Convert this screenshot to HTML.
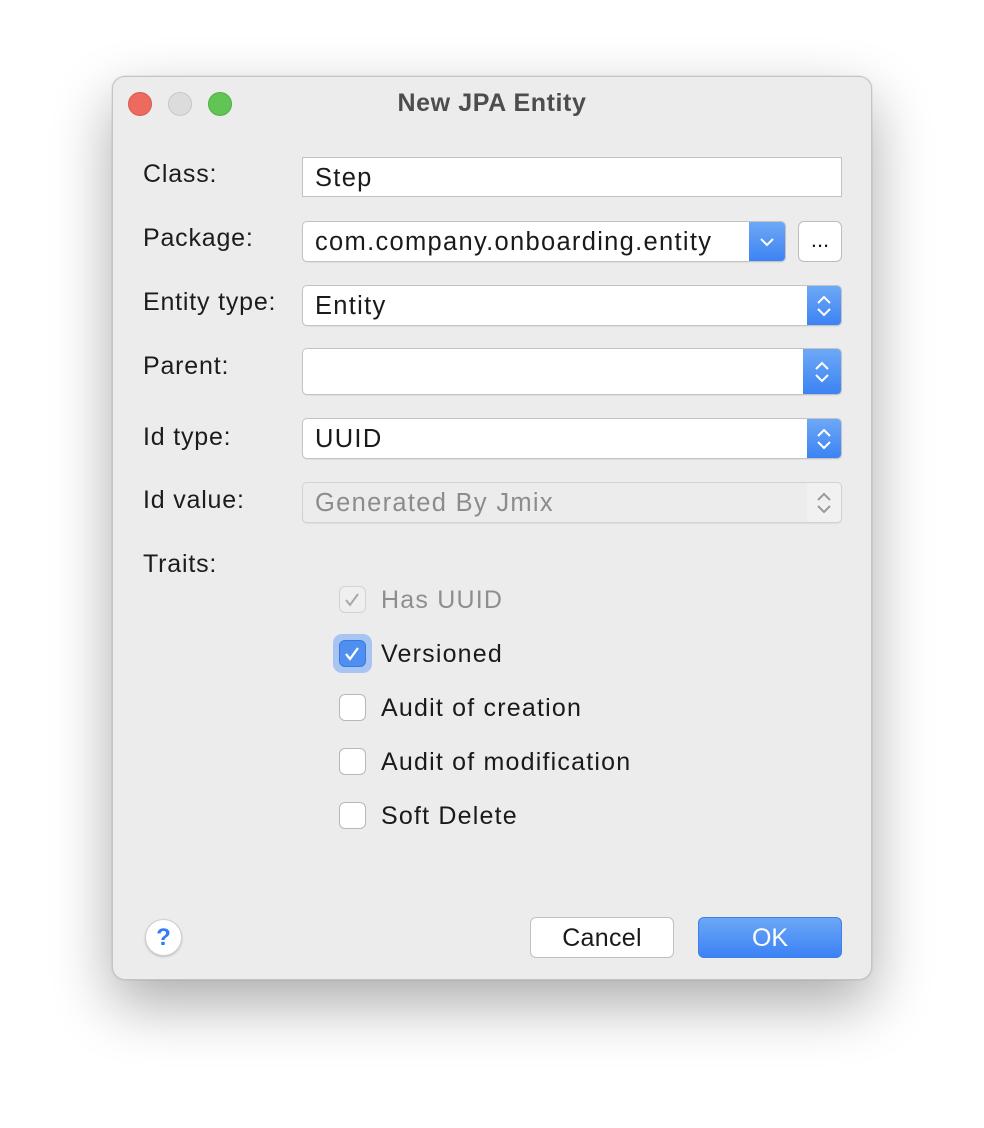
<!DOCTYPE html>
<html><head><style>
*{box-sizing:border-box;margin:0;padding:0}
body{width:984px;height:1128px;background:#fff;position:relative;overflow:hidden;font-family:"Liberation Sans",sans-serif;color:#1a1a1a}
.win{position:absolute;left:112px;top:76px;width:760px;height:904px;background:#ececec;border-radius:13px;border:1px solid #c4c4c4;box-shadow:0 24px 60px rgba(0,0,0,.33),0 0 0 1px rgba(0,0,0,.05)}
.a{position:absolute}
.lbl{position:absolute;left:143px;font-size:25px;letter-spacing:0.8px;color:#1c1c1c;line-height:30px}
.title{left:0;width:984px;top:89px;text-align:center;font-size:25px;font-weight:bold;color:#4d4d4d;letter-spacing:0.6px}
.dot{position:absolute;top:92px;width:24px;height:24px;border-radius:50%}
.fld{position:absolute;left:302px;background:#fff;border:1px solid #c3c3c3;font-size:25.5px;letter-spacing:1.3px;padding-left:12px;padding-top:2px;display:flex;align-items:center;white-space:nowrap}
.cmb{border-radius:5px;overflow:hidden;box-shadow:0 1px 1px rgba(0,0,0,.06)}
.btn{position:absolute;right:0;top:-1px;bottom:-1px;background:linear-gradient(#6fa9f6,#3b82f3);display:flex;align-items:center;justify-content:center}
.cb{position:absolute;left:339px;width:27px;height:27px;border-radius:6px;background:#fff;border:1px solid #b8b8b8}
.ct{position:absolute;left:381px;font-size:25px;letter-spacing:1.2px;line-height:27px}
</style></head><body>
<div class="win"></div>
<div class="dot" style="left:128px;background:#ed6a5e;border:1px solid #d45a4f"></div>
<div class="dot" style="left:168px;background:#dcdcdc;border:1px solid #c8c8c8"></div>
<div class="dot" style="left:208px;background:#61c554;border:1px solid #52ab45"></div>
<div class="a title">New JPA Entity</div>

<div class="lbl" style="top:159px">Class:</div>
<div class="fld" style="top:157px;width:540px;height:40px">Step</div>

<div class="lbl" style="top:223px">Package:</div>
<div class="fld cmb" style="top:221px;width:484px;height:41px">com.company.onboarding.entity
<div class="btn" style="width:36px"><svg width="16" height="10"><path d="M2 2l6 6 6-6" stroke="#fff" stroke-width="2" fill="none"/></svg></div></div>
<div class="a" style="left:798px;top:221px;width:44px;height:41px;background:#fff;border:1px solid #bcbcbc;border-radius:6px;font-size:22px;text-align:center;line-height:36px">...</div>

<div class="lbl" style="top:287px">Entity type:</div>
<div class="fld cmb" style="top:285px;width:540px;height:41px">Entity
<div class="btn" style="width:34px"><svg width="16" height="26"><path d="M2 10l6-6 6 6M2 16l6 6 6-6" stroke="#fff" stroke-width="2" fill="none"/></svg></div></div>

<div class="lbl" style="top:351px">Parent:</div>
<div class="fld cmb" style="top:348px;width:540px;height:47px">
<div class="btn" style="width:38px"><svg width="16" height="26"><path d="M2 10l6-6 6 6M2 16l6 6 6-6" stroke="#fff" stroke-width="2" fill="none"/></svg></div></div>

<div class="lbl" style="top:422px">Id type:</div>
<div class="fld cmb" style="top:418px;width:540px;height:41px">UUID
<div class="btn" style="width:34px"><svg width="16" height="26"><path d="M2 10l6-6 6 6M2 16l6 6 6-6" stroke="#fff" stroke-width="2" fill="none"/></svg></div></div>

<div class="lbl" style="top:485px">Id value:</div>
<div class="fld cmb" style="top:482px;width:540px;height:41px;background:#ececec;border-color:#d2d2d2;color:#8c8c8c">Generated By Jmix
<div class="btn" style="width:34px;background:#f1f1f1"><svg width="16" height="26"><path d="M2 10l6-6 6 6M2 16l6 6 6-6" stroke="#9a9a9a" stroke-width="2" fill="none"/></svg></div></div>

<div class="lbl" style="top:549px">Traits:</div>

<div class="cb" style="top:586px;background:#efefef;border-color:#d3d3d3"><svg width="25" height="25"><path d="M6 13l4 5 8-11" stroke="#a8a8a8" stroke-width="2" fill="none"/></svg></div>
<div class="ct" style="top:587px;color:#8e8e8e">Has UUID</div>

<div class="a" style="left:333px;top:634px;width:39px;height:39px;border-radius:9px;background:#a8c4f3"></div>
<div class="cb" style="top:640px;background:#4f8ff0;border-color:#3a78e0"><svg width="25" height="25"><path d="M6 13l4 5 8-11" stroke="#fff" stroke-width="2.3" fill="none"/></svg></div>
<div class="ct" style="top:641px">Versioned</div>

<div class="cb" style="top:694px"></div>
<div class="ct" style="top:695px">Audit of creation</div>
<div class="cb" style="top:748px"></div>
<div class="ct" style="top:749px">Audit of modification</div>
<div class="cb" style="top:802px"></div>
<div class="ct" style="top:803px">Soft Delete</div>

<div class="a" style="left:145px;top:919px;width:37px;height:37px;border-radius:50%;background:#fff;border:1px solid #d0d0d0;box-shadow:0 1px 2px rgba(0,0,0,.2);color:#2f7cf6;font-size:24px;font-weight:bold;text-align:center;line-height:35px">?</div>
<div class="a" style="left:530px;top:917px;width:144px;height:41px;background:#fff;border:1px solid #c0c0c0;border-radius:6px;font-size:25px;letter-spacing:0.3px;text-align:center;line-height:41px">Cancel</div>
<div class="a" style="left:698px;top:917px;width:144px;height:41px;background:linear-gradient(#6ca7f7,#3b82f4);border:1px solid #3f7fe6;border-radius:6px;font-size:25px;text-align:center;line-height:41px;color:#fff">OK</div>
</body></html>
